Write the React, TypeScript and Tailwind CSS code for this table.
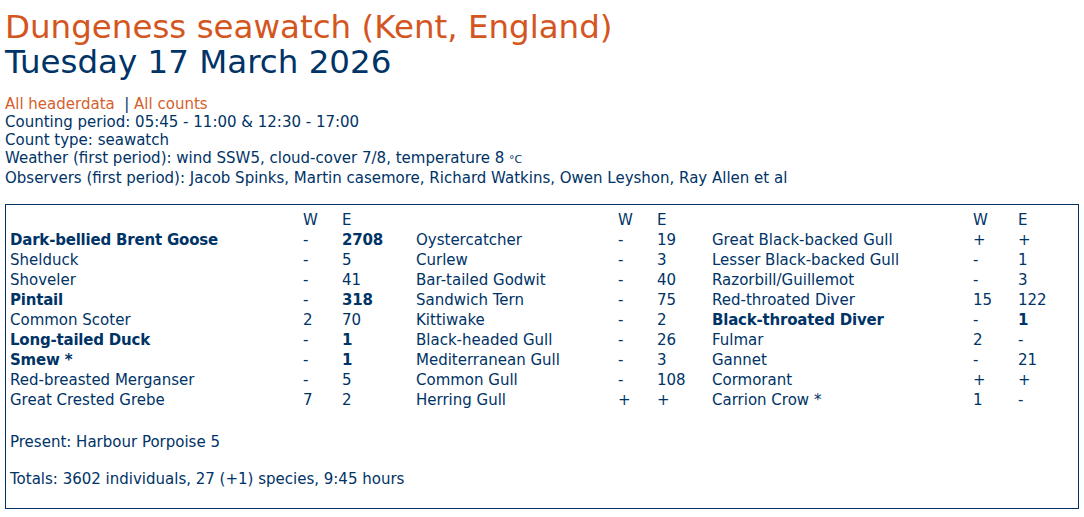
const rows: [string, string, string, boolean][][] = [
  [
    ['Dark-bellied Brent Goose', '-', '2708', true],
    ['Shelduck', '-', '5', false],
    ['Shoveler', '-', '41', false],
    ['Pintail', '-', '318', true],
    ['Common Scoter', '2', '70', false],
    ['Long-tailed Duck', '-', '1', true],
    ['Smew *', '-', '1', true],
    ['Red-breasted Merganser', '-', '5', false],
    ['Great Crested Grebe', '7', '2', false],
  ],
  [
    ['Oystercatcher', '-', '19', false],
    ['Curlew', '-', '3', false],
    ['Bar-tailed Godwit', '-', '40', false],
    ['Sandwich Tern', '-', '75', false],
    ['Kittiwake', '-', '2', false],
    ['Black-headed Gull', '-', '26', false],
    ['Mediterranean Gull', '-', '3', false],
    ['Common Gull', '-', '108', false],
    ['Herring Gull', '+', '+', false],
  ],
  [
    ['Great Black-backed Gull', '+', '+', false],
    ['Lesser Black-backed Gull', '-', '1', false],
    ['Razorbill/Guillemot', '-', '3', false],
    ['Red-throated Diver', '15', '122', false],
    ['Black-throated Diver', '-', '1', true],
    ['Fulmar', '2', '-', false],
    ['Gannet', '-', '21', false],
    ['Cormorant', '+', '+', false],
    ['Carrion Crow *', '1', '-', false],
  ],
]

export default function App() {
  return (
    <main className="min-h-screen bg-white px-[5px] text-[#003366]">
      <div className="pt-[10px] font-['DejaVu_Sans',sans-serif] text-[32.5px] leading-[34px]">
        <h1 className="text-[#d4561f]">Dungeness seawatch (Kent, England)</h1>
        <h2 className="leading-[37px]">Tuesday 17 March 2026</h2>
      </div>

      <div className="mt-[14px] font-['DejaVu_Sans',sans-serif] text-[15px] leading-[18px]">
        <p>
          <span className="text-[#d4612e]">All headerdata</span>
          <span>&nbsp; | </span>
          <span className="text-[#d4612e]">All counts</span>
        </p>
        <p>Counting period: 05:45 - 11:00 &amp; 12:30 - 17:00</p>
        <p>Count type: seawatch</p>
        <p>
          Weather (first period): wind SSW5, cloud-cover 7/8, temperature 8 <span className="text-[11px]">°C</span>
        </p>
        <p>Observers (first period): Jacob Spinks, Martin casemore, Richard Watkins, Owen Leyshon, Ray Allen et al</p>
      </div>

      <section className="mt-[17px] h-[305px] border border-[#003366] px-[4px] pt-[5px] font-['DejaVu_Sans',sans-serif] text-[15px] leading-[20px]">
        <div className="grid grid-cols-[293px_39px_74px_202px_39px_55px_261px_45px_1fr]">
          {[0, 1, 2].map((g) => (
            <div key={g} className="contents">
              <span />
              <span>W</span>
              <span>E</span>
            </div>
          ))}
          {rows[0].map((_, i) =>
            rows.map((group, g) => {
              const [name, w, e, bold] = group[i]
              return (
                <div key={`${g}-${i}`} className={bold ? 'contents font-bold tracking-[-0.2px]' : 'contents'}>
                  <span>{name}</span>
                  <span className="font-normal tracking-normal">{w}</span>
                  <span>{e}</span>
                </div>
              )
            })
          )}
        </div>

        <p className="mt-[22px]">Present: Harbour Porpoise 5</p>
        <p className="mt-[17px]">Totals: 3602 individuals, 27 (+1) species, 9:45 hours</p>
      </section>
    </main>
  )
}
